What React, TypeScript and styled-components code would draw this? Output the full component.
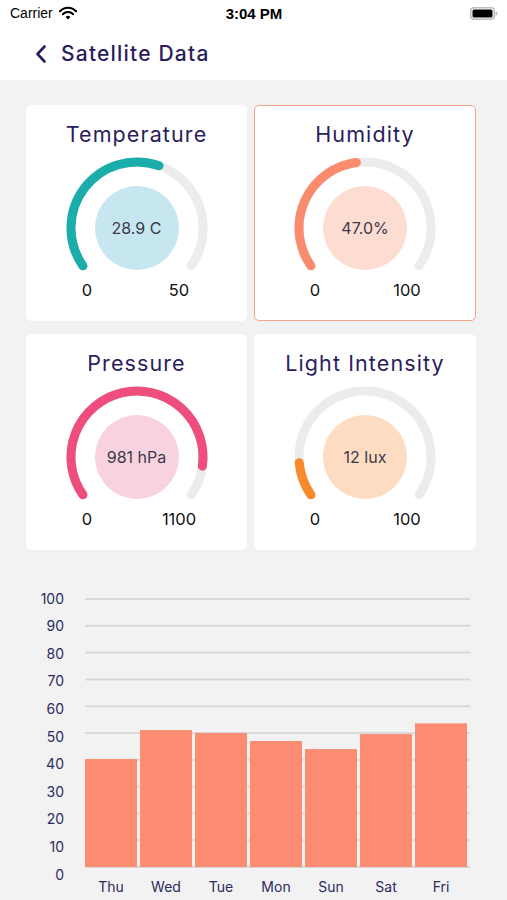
import React from 'react';
import styled, { createGlobalStyle } from 'styled-components';

const GlobalStyle = createGlobalStyle`
  html, body {
    margin: 0;
    padding: 0;
    background: #f2f2f2;
    overflow: hidden;
  }
  body {
    font-family: Inter, "Noto Sans", sans-serif;
  }
`;

interface GaugeData {
  title: string;
  value: number;
  max: number;
  label: string;
  color: string;
  bubble: string;
  highlight?: boolean;
}

const gauges: GaugeData[] = [
  { title: 'Temperature', value: 28.9, max: 50, label: '28.9 C', color: '#1aada9', bubble: '#c6e7ef' },
  { title: 'Humidity', value: 47, max: 100, label: '47.0%', color: '#fb8b6d', bubble: '#fddcd2', highlight: true },
  { title: 'Pressure', value: 981, max: 1100, label: '981 hPa', color: '#ee4d7e', bubble: '#f9d2df' },
  { title: 'Light Intensity', value: 12, max: 100, label: '12 lux', color: '#f98a2b', bubble: '#fddcc2' },
];

const week = [
  { day: 'Thu', value: 40.3 },
  { day: 'Wed', value: 51.1 },
  { day: 'Tue', value: 50 },
  { day: 'Mon', value: 47 },
  { day: 'Sun', value: 44 },
  { day: 'Sat', value: 49.6 },
  { day: 'Fri', value: 53.6 },
];

// gauge geometry: 250° sweep, centred in a 150px box
const SWEEP = 250;
const R = 66;
const CX = 75;
const CY = 75;

const point = (deg: number) => {
  const a = (deg * Math.PI) / 180;
  return [CX + R * Math.sin(a), CY - R * Math.cos(a)];
};

const arcPath = (from: number, to: number) => {
  const [x1, y1] = point(from);
  const [x2, y2] = point(to);
  const large = to - from > 180 ? 1 : 0;
  return `M ${x1.toFixed(2)} ${y1.toFixed(2)} A ${R} ${R} 0 ${large} 1 ${x2.toFixed(2)} ${y2.toFixed(2)}`;
};

const Gauge: React.FC<{ data: GaugeData }> = ({ data }) => {
  const start = -SWEEP / 2;
  const end = start + SWEEP * Math.min(data.value / data.max, 1);
  return (
    <Card $highlight={data.highlight}>
      <CardTitle>{data.title}</CardTitle>
      <GaugeWrap>
        <svg width="150" height="122" viewBox="0 0 150 122">
          <path d={arcPath(start, SWEEP / 2)} fill="none" stroke="#ececec" strokeWidth="9" strokeLinecap="round" />
          <path d={arcPath(start, end)} fill="none" stroke={data.color} strokeWidth="9" strokeLinecap="round" />
        </svg>
        <Bubble $bg={data.bubble}>{data.label}</Bubble>
      </GaugeWrap>
      <Limits>
        <Limit>0</Limit>
        <Limit>{data.max}</Limit>
      </Limits>
    </Card>
  );
};

const BarChart: React.FC = () => {
  const top = 29;
  const unit = 2.68;
  const base = top + 100 * unit;
  const left = 85;
  const barW = 52;
  const step = 55;
  return (
    <ChartSvg width="507" height="330" viewBox="0 0 507 330">
      {Array.from({ length: 11 }, (_, i) => (
        <line key={`g${i}`} x1={left} x2={470} y1={top + i * 26.8} y2={top + i * 26.8} stroke="#d9d9d9" strokeWidth="2" />
      ))}
      {Array.from({ length: 11 }, (_, i) => (
        <AxisText key={`y${i}`} x={64} y={28 + i * 27.6} textAnchor="end" dominantBaseline="central">
          {100 - i * 10}
        </AxisText>
      ))}
      {week.map((d, i) => (
        <rect key={d.day} x={left + i * step} y={base - d.value * unit} width={barW} height={d.value * unit} fill="#fc8d72" />
      ))}
      {week.map((d, i) => (
        <AxisText key={`x${d.day}`} x={left + i * step + barW / 2} y={316} textAnchor="middle" dominantBaseline="central">
          {d.day}
        </AxisText>
      ))}
    </ChartSvg>
  );
};

const App: React.FC = () => (
  <Page>
    <GlobalStyle />
    <StatusBar>
      <Carrier>
        Carrier
        <svg width="18" height="14" viewBox="0 0 18 14">
          <path d="M1 5.2 A11 11 0 0 1 17 5.2" fill="none" stroke="#000" strokeWidth="2.2" strokeLinecap="round" />
          <path d="M4 8.1 A7 7 0 0 1 14 8.1" fill="none" stroke="#000" strokeWidth="2.2" strokeLinecap="round" />
          <path d="M6.6 10.9 A3.4 3.4 0 0 1 11.4 10.9 L9 13.4 Z" fill="#000" />
        </svg>
      </Carrier>
      <Clock>3:04 PM</Clock>
      <Battery>
        <svg width="28" height="13" viewBox="0 0 28 13">
          <rect x="0.75" y="0.75" width="23.5" height="11.5" rx="3.2" fill="none" stroke="#bdbdbd" strokeWidth="1.5" />
          <rect x="2.5" y="2.5" width="20" height="8" rx="1.6" fill="#000" />
          <path d="M25.6 4.3 Q27.4 4.8 27.4 6.5 Q27.4 8.2 25.6 8.7 Z" fill="#bdbdbd" />
        </svg>
      </Battery>
    </StatusBar>
    <Header>
      <BackButton aria-label="Back">
        <svg width="12" height="20" viewBox="0 0 12 20">
          <path d="M9.5 2.5 L2.5 10 L9.5 17.5" fill="none" stroke="#2b1d5c" strokeWidth="2.6" strokeLinecap="round" strokeLinejoin="round" />
        </svg>
      </BackButton>
      <HeaderTitle>Satellite Data</HeaderTitle>
    </Header>
    <CardGrid>
      {gauges.map((g) => (
        <Gauge key={g.title} data={g} />
      ))}
    </CardGrid>
    <BarChart />
  </Page>
);

const Page = styled.div`
  width: 507px;
  height: 900px;
  background: #f2f2f2;
`;

const StatusBar = styled.div`
  height: 28px;
  background: #fff;
  display: grid;
  grid-template-columns: 1fr auto 1fr;
  align-items: center;
  padding: 0 9px 0 10px;
  font-family: "Liberation Sans", Arial, sans-serif;
  color: #000;
`;

const Carrier = styled.div`
  display: flex;
  align-items: center;
  gap: 6px;
  font-size: 14px;
  margin-top: -2px;
`;

const Clock = styled.div`
  font-size: 15px;
  font-weight: 700;
  margin-top: -2px;
`;

const Battery = styled.div`
  justify-self: end;
  display: flex;
  margin-top: -2px;
`;

const Header = styled.div`
  height: 52px;
  background: #fff;
  display: flex;
  align-items: center;
  padding-left: 35px;
  gap: 14px;
  margin-bottom: -2px;
`;

const BackButton = styled.button`
  border: none;
  background: none;
  padding: 0;
  display: flex;
  cursor: pointer;
  margin-top: -1px;
`;

const HeaderTitle = styled.h1`
  margin: 0;
  font-size: 21px;
  font-weight: 500;
  color: #2b1d5c;
  letter-spacing: 1.2px;
  margin-top: -2px;
`;

const CardGrid = styled.div`
  display: grid;
  grid-template-columns: 221px 222px;
  column-gap: 7px;
  row-gap: 13px;
  padding: 27px 0 0 26px;
`;

const Card = styled.div<{ $highlight?: boolean }>`
  height: 216px;
  box-sizing: border-box;
  background: #fff;
  border-radius: 5px;
  border: 1px solid ${(p) => (p.$highlight ? '#f3a48c' : '#fff')};
  display: flex;
  flex-direction: column;
  align-items: center;
`;

const CardTitle = styled.div`
  margin-top: 14px;
  font-size: 21.5px;
  line-height: 28px;
  color: #2b1d5c;
  letter-spacing: 1.1px;
`;

const GaugeWrap = styled.div`
  display: grid;
  margin-top: 5px;
  & > * {
    grid-area: 1 / 1;
  }
`;

const Bubble = styled.div<{ $bg: string }>`
  justify-self: center;
  align-self: start;
  margin-top: 33px;
  width: 84px;
  height: 84px;
  border-radius: 50%;
  background: ${(p) => p.$bg};
  display: flex;
  align-items: center;
  justify-content: center;
  font-size: 16px;
  color: #3a3a4a;
`;

const Limits = styled.div`
  align-self: flex-start;
  margin-left: 40px;
  display: grid;
  grid-template-columns: 40px 40px;
  column-gap: 52px;
  font-size: 16.5px;
  line-height: 22px;
  color: #111;
  text-align: center;
  margin-top: 4px;
`;

const Limit = styled.span``;

const ChartSvg = styled.svg`
  display: block;
  margin-top: 20px;
`;

const AxisText = styled.text`
  font-family: Inter, "Noto Sans", sans-serif;
  font-size: 14px;
  fill: #2d2a5e;
`;

export default App;
